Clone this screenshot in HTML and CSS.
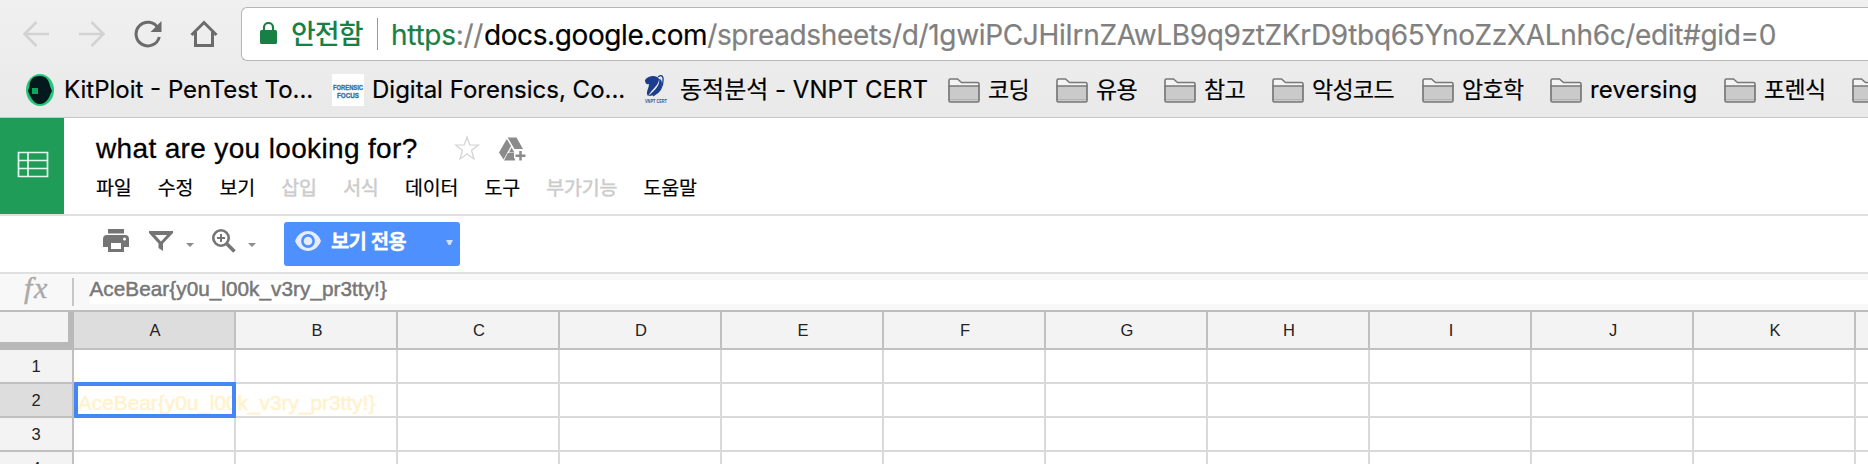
FILE: index.html
```html
<!DOCTYPE html>
<html lang="ko">
<head>
<meta charset="utf-8">
<title>what are you looking for?</title>
<link rel="stylesheet" href="styles.css">
</head>
<body>
<svg class="defs" aria-hidden="true">
  <symbol id="folder" viewBox="0 0 32 25">
    <path d="M1 8.5V2.5Q1 1 2.5 1H9.5L13.5 4.5H29.5Q31 4.5 31 6V8.5" fill="#f4f4f4" stroke="#787878" stroke-width="1.6"/>
    <path d="M1 8H31V22.500Q31 24 29.500 24H2.500Q1 24 1 22.500Z" fill="#cacaca" stroke="#787878" stroke-width="1.700"/>
    <path d="M2 21.500H30" stroke="#b5b5b5"/>
  </symbol>
</svg>
<div class="browser">
  <div class="navbar">
    <div class="nav-icons">
      <svg width="28" height="28" viewBox="0 0 28 28" fill="none" stroke="#d2d2d2" stroke-width="2.600"><path d="M27 14H3M14.500 2 2.500 14 14.500 26"/></svg>
      <svg width="28" height="28" viewBox="0 0 28 28" fill="none" stroke="#d2d2d2" stroke-width="2.600"><path d="M1 14H25M13.500 2 25.500 14 13.500 26"/></svg>
      <svg width="28" height="28" viewBox="0 0 28 28" fill="none" stroke="#6b6b6b" stroke-width="3"><path d="M24 8A11.800 11.800 0 1 0 25.300 17"/><path d="M27.500 1V12H16.500Z" fill="#6b6b6b" stroke="none"/></svg>
      <svg width="28" height="28" viewBox="0 0 28 28" fill="none" stroke="#6b6b6b" stroke-width="3"><path d="M1.500 15 14 2.500 26.500 15M5.500 12V25.500H22.500V12"/></svg>
    </div>
    <div class="omnibox">
      <svg class="lock" width="17" height="22" viewBox="0 0 17 22"><rect y="8" width="17" height="14" rx="1.500" fill="#188045"/><path d="M4 9V5.500a4.500 4.500 0 0 1 9 0V9" fill="none" stroke="#188045" stroke-width="2.200"/></svg>
      <span class="secure">안전함</span>
      <span class="url"><span class="scheme">https</span>://<span class="host">docs.google.com</span><span class="path">/spreadsheets/d/1gwiPCJHiIrnZAwLB9q9ztZKrD9tbq65YnoZzXALnh6c/edit#gid=0</span></span>
    </div>
  </div>
  <div class="bookmarks">
    <div class="bm bm-kit"><svg width="28" height="32" viewBox="0 0 28 32"><ellipse cx="14" cy="16" rx="14" ry="16" fill="#25c57c"/><path d="M14 2C6 2 3.500 7 3.500 12L2 17C3 20 4 22 6 25Q9 30 14 30C19 30 23 25 24 21L26 17 24 12C23 6 20 2 14 2Z" fill="#04191d"/><rect x="6" y="14" width="6" height="6" fill="#12a35d"/></svg><span>KitPloit - PenTest To...</span></div>
    <div class="bm bm-dig"><svg width="32" height="32" viewBox="0 0 32 32"><rect width="32" height="32" fill="#fff"/><text x="1" y="16" class="fav-blue" textLength="30" lengthAdjust="spacingAndGlyphs">FORENSIC</text><text x="5" y="24" class="fav-blue" textLength="22" lengthAdjust="spacingAndGlyphs">FOCUS</text></svg><span>Digital Forensics, Co...</span></div>
    <div class="bm bm-vnpt"><svg width="24" height="30" viewBox="0 0 24 30"><path d="M1 5C4 1 12-1 15 4C15 10 9 13 4 21C1 17 5 14 5 9Q1 10 1 5Z" fill="#1c3d8d"/><path d="M15 4Q17 11 4 21Q16 21 18 9Q18 4 15 4" fill="#1c3d8d"/><path d="M14 2Q18-1 19 3 20 15 9 21" fill="none" stroke="#1c3d8d" stroke-width="1.300"/><text x="1" y="28" class="fav-small" textLength="22" lengthAdjust="spacingAndGlyphs">VNPT CERT</text></svg><span>동적분석 - VNPT CERT</span></div>
    <div class="bm folder w108"><svg width="32" height="25"><use href="#folder"/></svg><span>코딩</span></div>
    <div class="bm folder w108"><svg width="32" height="25"><use href="#folder"/></svg><span>유용</span></div>
    <div class="bm folder w108"><svg width="32" height="25"><use href="#folder"/></svg><span>참고</span></div>
    <div class="bm folder w150"><svg width="32" height="25"><use href="#folder"/></svg><span>악성코드</span></div>
    <div class="bm folder w128"><svg width="32" height="25"><use href="#folder"/></svg><span>암호학</span></div>
    <div class="bm folder latin w174"><svg width="32" height="25"><use href="#folder"/></svg><span>reversing</span></div>
    <div class="bm folder w128"><svg width="32" height="25"><use href="#folder"/></svg><span>포렌식</span></div>
    <div class="bm folder"><svg width="32" height="25"><use href="#folder"/></svg></div>
  </div>
</div>
<header class="doc-head">
  <div class="logo"><svg width="32" height="27" viewBox="0 0 32 27" fill="none" stroke="#e6f5ed" stroke-width="1.700"><path d="M1.500 1.500H30.500V25.500H1.500ZM1.500 9.500H30.500M1.500 17.500H30.500M11 1.500V25.500"/></svg></div>
  <div class="doc-info">
    <div class="title-row">
      <h1>what are you looking for?</h1>
      <svg class="star" width="26" height="26" viewBox="0 0 26 26" fill="none" stroke="#d5d5d5" stroke-width="1.300"><path d="M13 2 15.700 9.800 24.500 10 17.500 15.200 20 24 13 19 6 24 8.500 15.200 1.500 10 10.300 9.800Z"/></svg>
      <svg class="drive" width="28" height="26" viewBox="0 0 28 26" fill="#8b8b8b"><path d="M9.500 1.500H18.500L25 13H16.500L10 2ZM8.800 3 13 10 5.500 23.500 1 16.500ZM9.800 17H17V24.500H6Z"/><path d="M13.500 11.500 16.500 16.500H11Z"/><path d="M22.500 13.500V26M16 19.700H28" stroke="#fff" stroke-width="5.500"/><path d="M22.500 15V24.500M17.500 19.700H27.500" stroke="#8b8b8b" stroke-width="2.500"/></svg>
    </div>
    <nav class="menu"><span>파일</span><span>수정</span><span>보기</span><span class="off">삽입</span><span class="off">서식</span><span>데이터</span><span>도구</span><span class="off">부가기능</span><span>도움말</span></nav>
  </div>
</header>
<div class="toolbar">
  <svg class="print" width="26" height="23" viewBox="0 0 26 23" fill="#757575"><path d="M5 0H21V4.500H5ZM4 6H22Q26 6 26 10V18H21V23H5V18H0V10Q0 6 4 6Z"/><path d="M8 14H18V20H8Z" fill="#fff"/><circle cx="21.500" cy="10" r="1.500" fill="#fff"/></svg>
  <svg class="filter" width="24" height="20" viewBox="0 0 24 20"><path d="M0 0H24V2L14 12.500V20L9.500 17V12.500L0 2ZM6 4 12 10.500 18 4Z" fill="#757575" fill-rule="evenodd"/></svg>
  <svg class="caret c1" width="8" height="4" viewBox="0 0 8 4"><path d="M0 0H8L4 4Z" fill="#8c8c8c"/></svg>
  <svg class="zoom" width="24" height="24" viewBox="0 0 24 24" fill="none" stroke="#757575"><circle cx="9" cy="9" r="7.700" stroke-width="2.600"/><path d="M15 15 22.500 22.500" stroke-width="3.500"/><path d="M9 5V13M5 9H13" stroke-width="2"/></svg>
  <svg class="caret c2" width="8" height="4" viewBox="0 0 8 4"><path d="M0 0H8L4 4Z" fill="#8c8c8c"/></svg>
  <div class="view-only">
    <svg width="26" height="20" viewBox="0 0 26 20"><path d="M0 10C5-3.300 21-3.300 26 10 21 23.300 5 23.300 0 10Z" fill="#e4edff"/><circle cx="13" cy="10" r="5.600" fill="none" stroke="#4d90fe" stroke-width="2.600"/></svg>
    <span>보기 전용</span>
    <svg class="vo-caret" width="7" height="5" viewBox="0 0 7 5"><path d="M0 0H7L4.500 5H2.500Z" fill="#cfe0ff"/></svg>
  </div>
</div>
<div class="formula"><svg class="fx" width="72" height="36" viewBox="0 0 72 36"><text x="24" y="24">f</text><text x="34" y="24">x</text></svg><span class="rule"></span><span class="formula-text">AceBear{y0u_l00k_v3ry_pr3tty!}</span></div>
<main class="sheet">
  <div class="corner"></div><div class="col sel">A</div><div class="col">B</div><div class="col">C</div><div class="col">D</div><div class="col">E</div><div class="col">F</div><div class="col">G</div><div class="col">H</div><div class="col">I</div><div class="col">J</div><div class="col">K</div><div class="col"></div>
  <div class="row">1</div><i></i><i></i><i></i><i></i><i></i><i></i><i></i><i></i><i></i><i></i><i></i><i></i>
  <div class="row sel">2</div><div class="active"><span>AceBear{y0u_l00k_v3ry_pr3tty!}</span></div><i></i><i></i><i></i><i></i><i></i><i></i><i></i><i></i><i></i><i></i><i></i>
  <div class="row">3</div><i></i><i></i><i></i><i></i><i></i><i></i><i></i><i></i><i></i><i></i><i></i><i></i>
  <div class="row">4</div><i></i><i></i><i></i><i></i><i></i><i></i><i></i><i></i><i></i><i></i><i></i><i></i>
</main>
</body>
</html>
```
FILE: styles.css
```css
* { box-sizing: border-box; }
body { margin: 0; height: 464px; overflow: hidden; background: #fff; color: #000; font-family: "Liberation Sans", "Noto Sans CJK KR", sans-serif; }
svg { display: block; flex: none; }
.defs { position: absolute; width: 0; height: 0; }
.browser { height: 118px; background: linear-gradient(#f0f0f0, #e9e9e9); border-bottom: 1px solid #c6c6c6; font-family: Inter, "Noto Sans CJK KR", sans-serif; overflow: hidden; }
.navbar { display: flex; height: 61px; padding-top: 7px; }
.nav-icons { display: flex; gap: 28px; width: 241px; padding: 13px 0 0 22px; flex: none; }
.omnibox { display: flex; align-items: center; flex: 1; height: 54px; padding-left: 18px; background: #fff; border: 1px solid #b6b6b6; border-right: 0; border-radius: 6px 0 0 6px; white-space: nowrap; }
.secure { width: 87px; margin-left: 14px; margin-right: 13px; border-right: 1px solid #999; height: 32px; line-height: 34px; font-size: 27px; font-weight: 500; letter-spacing: -1px; color: #188045; }
.lock { margin-top: -2px; }
.url { font-size: 28px; line-height: 34px; color: #808080; letter-spacing: -0.3px; padding-top: 1px; -webkit-text-stroke: .2px; }
.scheme { color: #188045; }
.host { color: #000; letter-spacing: -.4px; margin-left: 1px; }
.path { letter-spacing: -.34px; }
.bookmarks { display: flex; height: 58px; padding-left: 26px; white-space: nowrap; font-size: 24px; line-height: 30px; -webkit-text-stroke: .2px; }
.bm { display: flex; align-items: center; flex: none; }
.bm-kit { width: 306px; gap: 10px; }
.bm-dig { width: 312px; gap: 8px; }
.bm-vnpt { width: 304px; gap: 12px; }
.folder { gap: 8px; font-size: 23px; letter-spacing: -.7px; }
.latin { font-size: 24px; letter-spacing: .2px; }
.w108 { width: 108px; }
.w128 { width: 128px; }
.w150 { width: 150px; }
.w174 { width: 174px; }
.fav-blue { font: bold 8px "Liberation Sans", sans-serif; fill: #3474a8; stroke: #3474a8; stroke-width: .4px; }
.fav-small { font: bold 5px "Liberation Sans", sans-serif; fill: #3c5791; }
.doc-head { display: flex; height: 98px; border-bottom: 2px solid #e0e0e0; }
.logo { display: grid; place-items: center; width: 64px; height: 96px; background: #1f9d58; }
.logo svg { margin-top: -4px; margin-left: 1px; }
.doc-info { padding: 14px 0 0 32px; }
.title-row { display: flex; height: 38px; }
h1 { margin: 0; width: 358px; font-size: 28px; font-weight: 400; line-height: 34px; letter-spacing: .35px; white-space: nowrap; -webkit-text-stroke: .3px; }
.star { margin-top: 3px; }
.drive { margin: 4px 0 0 18px; }
.menu { display: flex; gap: 26.300px; font-size: 19.500px; line-height: 34px; letter-spacing: -.2px; white-space: nowrap; font-family: "Noto Sans CJK KR", sans-serif; -webkit-text-stroke: .2px; }
.off { color: #ccc; -webkit-text-stroke: .5px; }
.toolbar { display: flex; height: 58px; border-bottom: 2px solid #e0e0e0; padding-left: 103px; }
.print { margin-top: 13px; }
.filter { margin: 15px 0 0 20px; }
.c1 { margin: 27px 0 0 13px; }
.zoom { margin: 13px 0 0 18px; }
.c2 { margin: 27px 0 0 12px; }
.view-only { display: flex; width: 176px; height: 44px; margin: 6px 0 0 28px; padding: 9px 7px 0 11px; background: #4d90fe; border-radius: 3px; color: #fff; font: bold 20px/19px "Noto Sans CJK KR", sans-serif; letter-spacing: -.9px; white-space: nowrap; -webkit-text-stroke: .3px; }
.view-only span { margin-left: 10px; }
.vo-caret { margin: 9px 0 0 auto; }
.formula { display: flex; height: 38px; background: #f8f8f8; border-bottom: 2px solid #bdbdbd; }
.fx { font: italic 30px "Liberation Serif", serif; fill: #aaa; stroke: #aaa; stroke-width: .4px; }
.rule { width: 2px; height: 28px; margin-top: 4px; background: #c6c6c6; }
.formula-text { flex: 1; height: 24px; margin: 6px 0 0 16px; font-size: 20.700px; line-height: 18px; color: #777; background: #fff; text-indent: -.5px; letter-spacing: .06px; -webkit-text-stroke: .5px; }
.sheet { display: grid; height: 152px; overflow: hidden; grid-template-columns: 74px repeat(11, 162px) 12px; grid-template-rows: 38px repeat(3, 34px) 34px; color: #222; font-size: 16.500px; }
.corner { background: #f3f3f3; border-right: 6px solid #b9b9b9; border-bottom: 8px solid #b9b9b9; }
.col, .row { display: grid; place-items: center; background: #f3f3f3; border-right: 2px solid #c0c0c0; border-bottom: 2px solid #c0c0c0; }
.col { padding-left: 2px; }
.col:nth-child(13) { border-right: 0; }
.sheet .sel { background: #ddd; }
.sheet i { border-right: 2px solid #d9d9d9; border-bottom: 2px solid #d9d9d9; }
.sheet i:nth-child(13n) { border-right: 0; }
.active { position: relative; margin-top: -2px; border: 4px solid #4486f4; }
.active span { position: absolute; left: 0; top: 5px; font-size: 20.700px; line-height: 24px; letter-spacing: .06px; color: #fff2cc; -webkit-text-stroke: .5px; }
.active::after { content: ""; position: absolute; inset: -4px; margin-right: -2px; border: 4px solid #4486f4; }
.active { border-right-width: 2px; }
.active::after { right: -2px; margin-right: 0; }
```
